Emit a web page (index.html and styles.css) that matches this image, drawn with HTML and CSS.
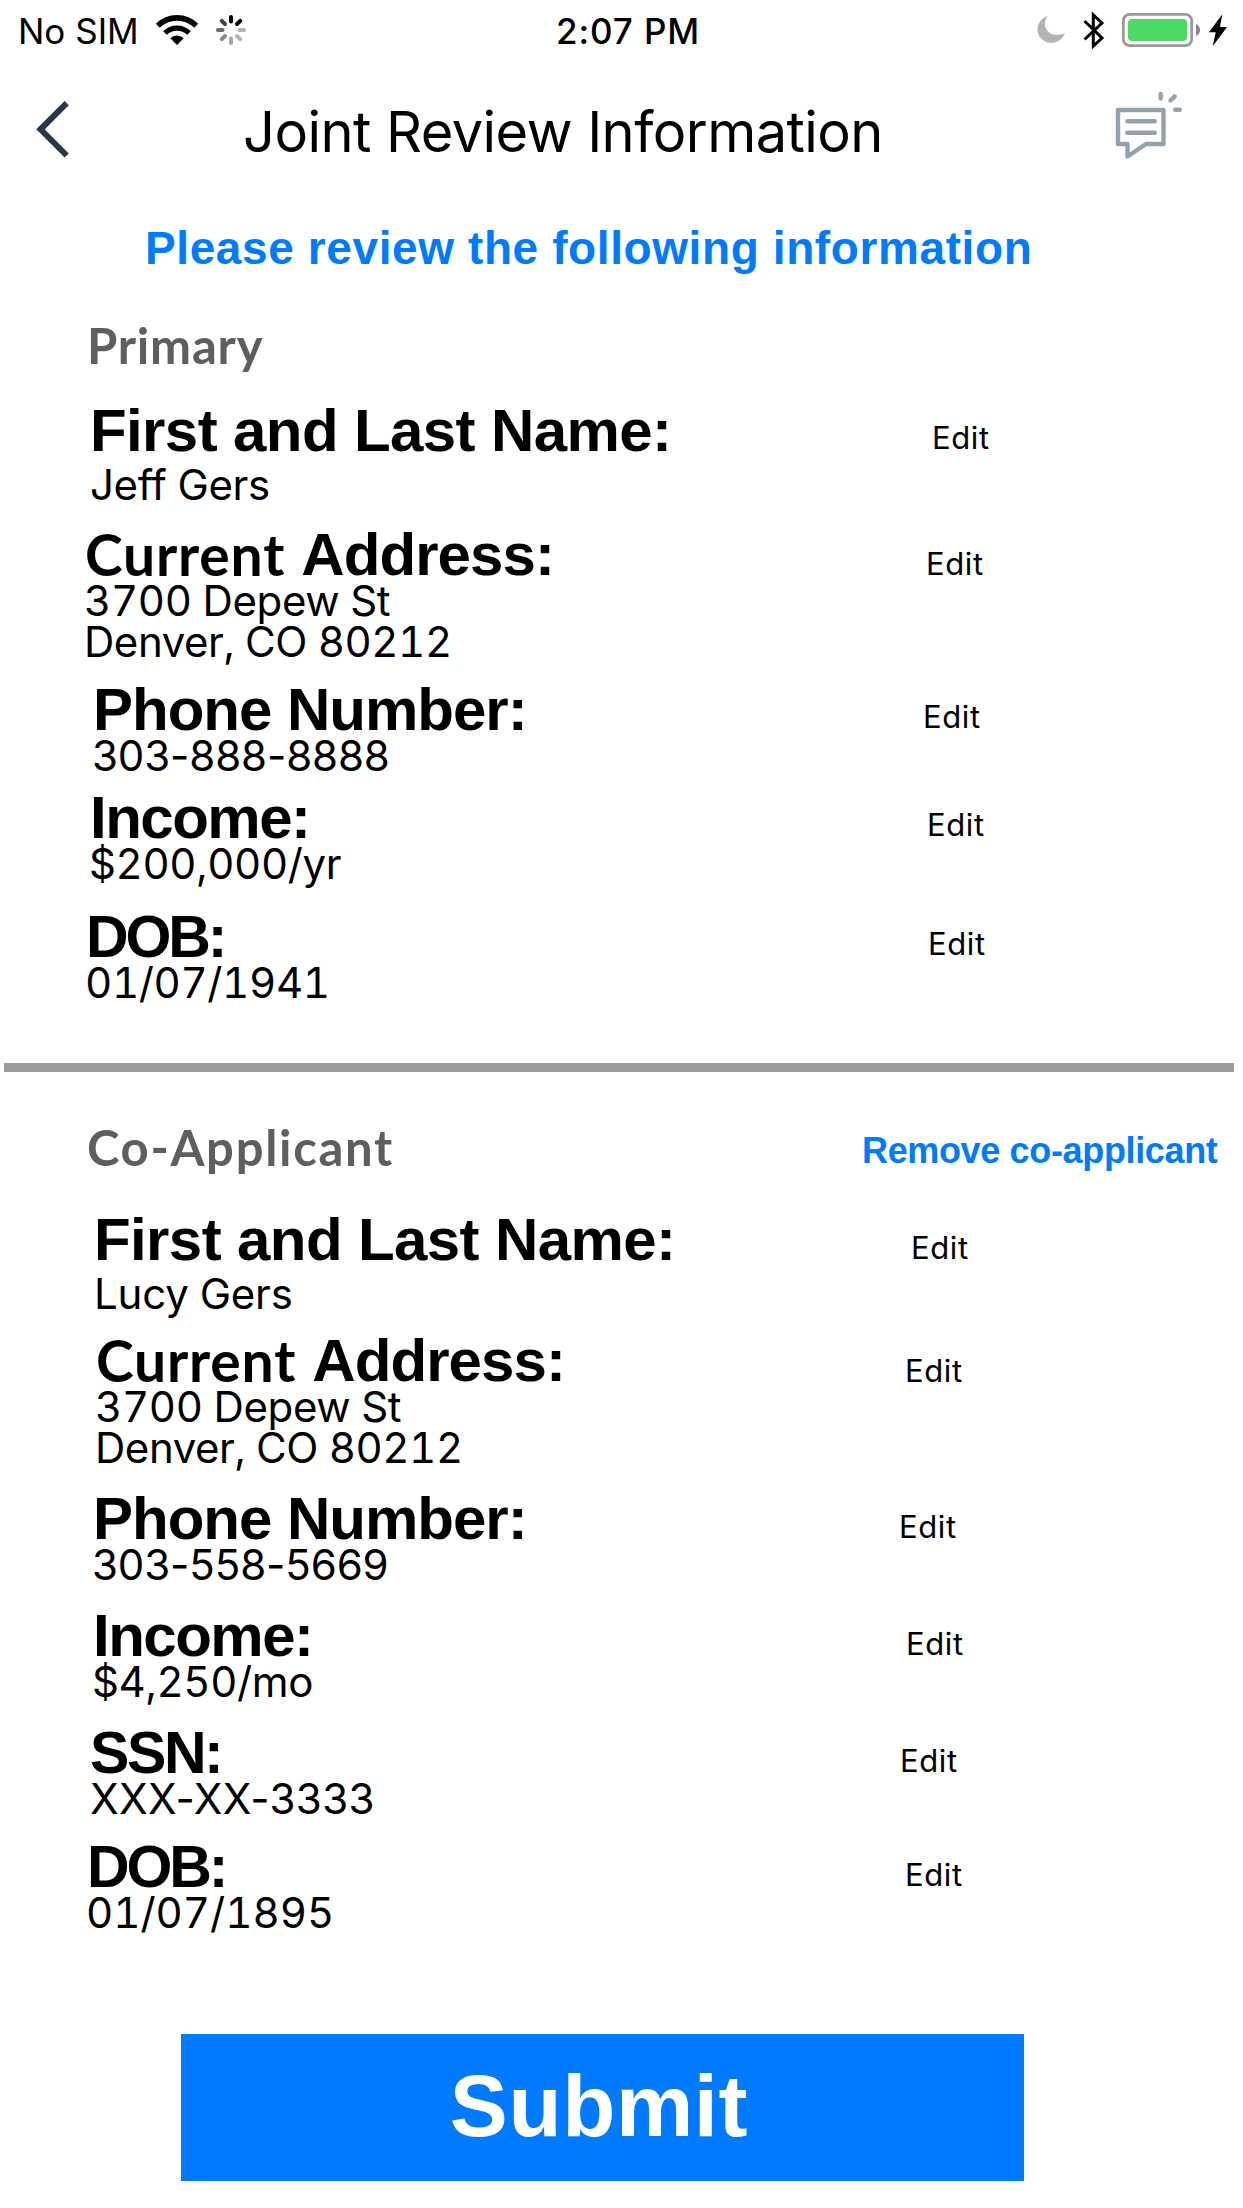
FILE: index.html
```html
<!DOCTYPE html>
<html lang="en">
<head>
<meta charset="utf-8">
<title>Joint Review Information</title>
<link rel="stylesheet" href="styles.css">
</head>
<body>
<div class="status">
  <div class="status-left">
    <span class="carrier">No SIM</span>
    <svg class="wifi" width="44" height="32" viewBox="155 14 44 32" fill="none" stroke="#000">
      <path d="M157.8 25.8A27.2 27.2 0 0 1 196.2 25.8" stroke-width="5.6"/>
      <path d="M165 33A17 17 0 0 1 189 33" stroke-width="5.2"/>
      <path d="M177 45L170.3 38.3A9.5 9.5 0 0 1 183.7 38.3Z" fill="#000" stroke="none"/>
    </svg>
    <svg class="spinner" width="32" height="32" viewBox="-16 -16 32 32" stroke-width="4" stroke-linecap="round">
      <path d="M0-8.500V-13" stroke="#000"/>
      <path d="M6-6L9.200-9.200" stroke="#000"/>
      <path d="M8.500 0H13" stroke="#b3b3b3"/>
      <path d="M6 6L9.200 9.200" stroke="#b3b3b3"/>
      <path d="M0 8.500V13" stroke="#a3a3a3"/>
      <path d="M-6 6L-9.200 9.200" stroke="#888"/>
      <path d="M-8.500 0H-13" stroke="#6a6a6a"/>
      <path d="M-6-6L-9.200-9.200" stroke="#444"/>
    </svg>
  </div>
  <span class="clock">2:07 PM</span>
  <svg class="indicators" width="200" height="40" viewBox="1030 10 200 40">
    <path d="M1047.500 16C1036 20 1034.500 34 1043 40C1051 46 1062 42 1065 33C1050 40 1040 27 1047.500 16Z" fill="#b3b3b3"/>
    <path d="M1084.500 21L1102 38L1093.300 46V15L1102 23L1084.500 39.500" fill="none" stroke="#000" stroke-width="3"/>
    <rect x="1123.300" y="14.300" width="68.400" height="31.400" rx="6.500" fill="none" stroke="#999" stroke-width="2.800"/>
    <rect x="1128" y="19" width="59" height="22" rx="4" fill="#4cd964"/>
    <path d="M1196 23.800Q1200 26 1200 30T1196 36.200Z" fill="#888"/>
    <path d="M1222.300 14.300L1220 27H1227L1212.700 46.300L1215.700 32.300H1209Z"/>
  </svg>
</div>

<header class="navbar">
  <svg class="back" width="36" height="60" viewBox="34 99 36 60" fill="none" stroke="#2b3645" stroke-width="6">
    <path d="M66.700 103.200L40.500 129.300L66.700 155.500"/>
  </svg>
  <h1 class="title">Joint Review Information</h1>
  <svg class="message" width="70" height="70" viewBox="1114 90 70 70" fill="none" stroke="#93a1ae" stroke-width="4.400" stroke-linecap="round" stroke-linejoin="round">
    <path d="M1118 110H1163.500V144H1146L1127.500 156.500V144H1118Z"/>
    <path d="M1127.300 121.300H1154.800M1127.300 132.700H1154.800M1160.700 94V98.500M1174.800 96.300L1170.500 100.500M1175.200 109.800H1179.800"/>
  </svg>
</header>

<p class="notice">Please review the following information</p>

<section class="primary">
  <div class="section-head"><h2 class="section-title t-primary">Primary</h2></div>
  <div class="field p-name">
    <div><h3 class="label">First and Last Name:</h3><p class="value v-jeff">Jeff Gers</p></div>
    <a class="edit">Edit</a>
  </div>
  <div class="field p-address">
    <div><h3 class="label l-address"><span class="current">Current</span> <span class="address">Address:</span></h3><p class="value"><span class="street">3700 Depew St</span><br><span class="city">Denver, CO 80212</span></p></div>
    <a class="edit">Edit</a>
  </div>
  <div class="field p-phone">
    <div><h3 class="label l-phone">Phone Number:</h3><p class="value v-dashed">303-888-8888</p></div>
    <a class="edit">Edit</a>
  </div>
  <div class="field p-income">
    <div><h3 class="label l-income">Income:</h3><p class="value">$200,000/yr</p></div>
    <a class="edit">Edit</a>
  </div>
  <div class="field p-dob">
    <div><h3 class="label l-dob">DOB:</h3><p class="value">01/07/1941</p></div>
    <a class="edit">Edit</a>
  </div>
</section>

<hr class="divider">

<section class="coapp">
  <div class="section-head co-head"><h2 class="section-title t-co">Co-Applicant</h2><a class="remove">Remove co-applicant</a></div>
  <div class="field c-name">
    <div><h3 class="label">First and Last Name:</h3><p class="value v-lucy">Lucy Gers</p></div>
    <a class="edit">Edit</a>
  </div>
  <div class="field c-address">
    <div><h3 class="label l-address"><span class="current">Current</span> <span class="address">Address:</span></h3><p class="value"><span class="street">3700 Depew St</span><br><span class="city">Denver, CO 80212</span></p></div>
    <a class="edit">Edit</a>
  </div>
  <div class="field c-phone">
    <div><h3 class="label l-phone">Phone Number:</h3><p class="value v-dashed">303-558-5669</p></div>
    <a class="edit">Edit</a>
  </div>
  <div class="field c-income">
    <div><h3 class="label l-income">Income:</h3><p class="value">$4,250/mo</p></div>
    <a class="edit">Edit</a>
  </div>
  <div class="field c-ssn">
    <div><h3 class="label l-ssn">SSN:</h3><p class="value v-dashed v-ssn">XXX-XX-3333</p></div>
    <a class="edit">Edit</a>
  </div>
  <div class="field c-dob">
    <div><h3 class="label l-dob">DOB:</h3><p class="value v-born">01/07/1895</p></div>
    <a class="edit">Edit</a>
  </div>
</section>

<button class="submit">Submit</button>
</body>
</html>
```
FILE: styles.css
```css
* { box-sizing: border-box; margin: 0; padding: 0; }
body {
  width: 1243px;
  height: 2208px;
  overflow: hidden;
  background: #fff;
  color: #000;
  font-family: Inter, "Liberation Sans", sans-serif;
  display: flex;
  flex-direction: column;
}
h1, h2, h3 { font-weight: 400; }
svg { display: block; flex: none; }

.status {
  height: 60px;
  display: grid;
  grid-template-columns: 556px 1fr 200px;
  padding-right: 13px;
  font-size: 35px;
  line-height: 63px;
  white-space: nowrap;
}
.status-left { display: flex; padding-left: 18px; }
.carrier { width: 137px; }
.wifi { margin-top: 14px; }
.spinner { margin: 14px 0 0 16px; }
.clock { font-weight: 500; letter-spacing: 0.9px; }
.indicators { margin-top: 10px; }

.navbar {
  height: 140px;
  display: grid;
  grid-template-columns: 209px 871px 70px;
  padding-left: 34px;
}
.back { margin-top: 39px; }
.title { font-size: 56px; line-height: 144px; letter-spacing: -0.55px; white-space: nowrap; }
.message { margin-top: 30px; }

.notice {
  height: 100px;
  padding-left: 145px;
  font: bold 46px/97px "Liberation Sans", sans-serif;
  letter-spacing: 0.6px;
  color: #007aff;
  white-space: nowrap;
}

.section-head {
  height: 104px;
  padding-left: 87px;
  display: grid;
  grid-template-columns: 775px auto;
  white-space: nowrap;
}
.co-head { height: 141px; }
.section-title { font: bold 49px/91px Lato, sans-serif; color: #5e5e5e; }
.t-primary { letter-spacing: 0.8px; }
.t-co { letter-spacing: 1.7px; }
.co-head .section-title { line-height: 150px; }
.remove { font: bold 36px/158px "Liberation Sans", sans-serif; letter-spacing: -0.35px; color: #007aff; }

.field {
  display: grid;
  grid-template-columns: var(--edit) auto;
  align-items: start;
  white-space: nowrap;
}
.label {
  height: 52px;
  padding-left: 1px;
  font: bold 60px/54px "Liberation Sans", sans-serif;
  letter-spacing: -0.6px;
}
.l-address { line-height: 53px; }
.l-phone { letter-spacing: -1px; }
.l-income { letter-spacing: -1.5px; }
.l-dob { font-size: 59px; letter-spacing: -3.1px; }
.l-ssn { font-size: 59px; letter-spacing: -2.4px; padding-left: 0; }
.current { font-family: Lato, sans-serif; font-size: 57px; letter-spacing: 0.8px; }
.address { vertical-align: 1px; letter-spacing: -0.9px; }
.value {
  font-size: 42px;
  line-height: 41px;
  letter-spacing: -0.35px;
  font-feature-settings: "tnum";
}
.city { letter-spacing: -0.45px; }
.v-jeff, .v-lucy { padding-left: 1px; }
.v-lucy { letter-spacing: -0.2px; }
.v-dashed { font-feature-settings: normal; letter-spacing: -0.1px; }
.v-ssn { letter-spacing: 0.35px; }
.v-born { letter-spacing: 0; }
.edit { font-size: 31px; line-height: 68px; height: 68px; letter-spacing: 0.6px; }
.coapp .edit { line-height: 69px; }
.p-address .edit { line-height: 71px; }
.coapp .c-address .edit { line-height: 73px; }

.p-name { margin-left: 89px; height: 124px; --edit: 843px; }
.p-address { margin-left: 84px; height: 155px; --edit: 842px; }
.p-phone { margin-left: 92px; height: 108px; --edit: 831px; }
.p-income { margin-left: 89px; height: 119px; --edit: 838px; }
.p-dob { margin-left: 85px; height: 153px; --edit: 843px; }
.p-name .value, .c-name .value { margin-top: 8px; }

.divider { flex: none; width: 1230px; height: 9px; margin-left: 4px; border: 0; background: #9b9b9b; }

.c-name { margin-left: 93px; height: 121px; --edit: 818px; }
.c-address { margin-left: 95px; height: 158px; --edit: 810px; }
.c-phone { margin-left: 92px; height: 117px; --edit: 807px; }
.c-income { margin-left: 92px; height: 117px; --edit: 814px; }
.c-ssn { margin-left: 90px; height: 114px; --edit: 810px; }
.c-dob { margin-left: 86px; height: 194px; --edit: 819px; }

.submit {
  flex: none;
  width: 843px;
  height: 147px;
  margin-left: 181px;
  padding-right: 7px;
  padding-bottom: 4px;
  border: 0;
  background: #007aff;
  color: #fff;
  font: bold 87px/143px "Liberation Sans", sans-serif;
  letter-spacing: 0.6px;
}
```
